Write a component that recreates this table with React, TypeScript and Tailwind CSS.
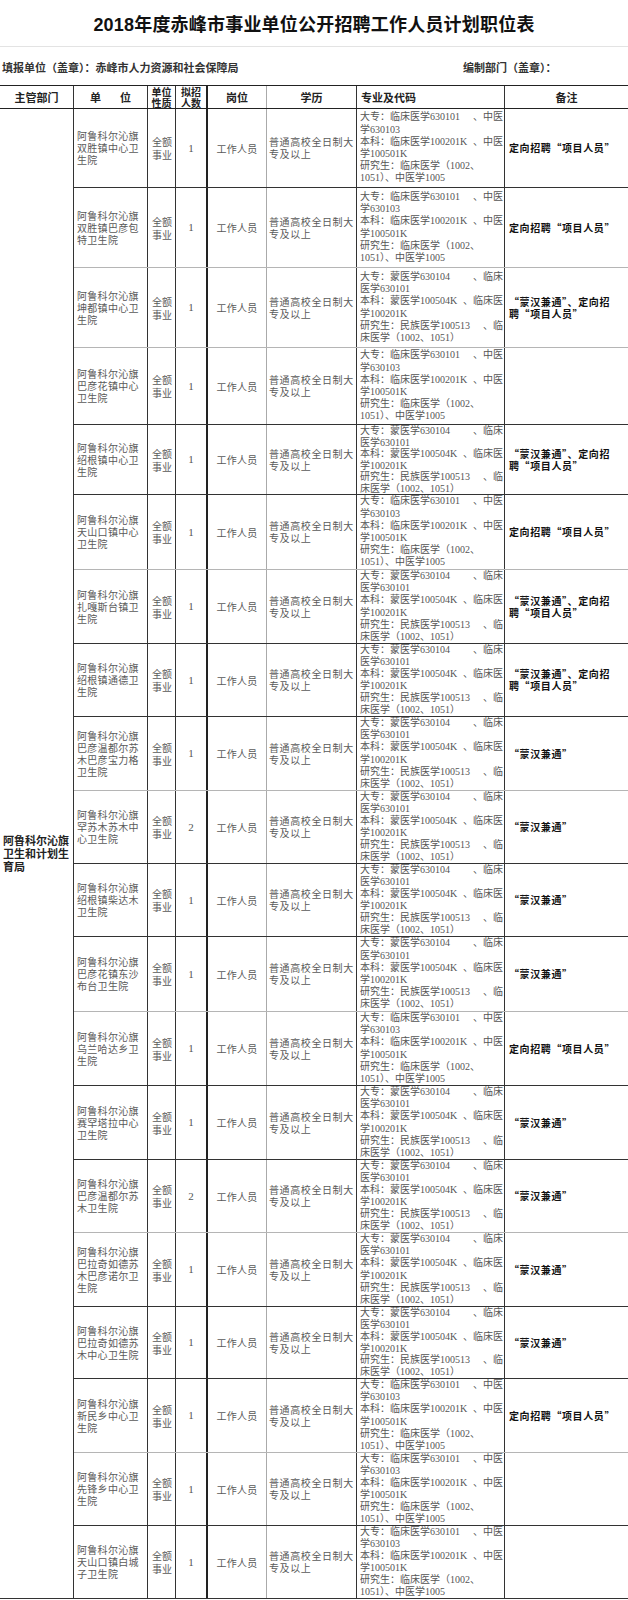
import React from 'react';

type Spec = 'A' | 'B';
type Note = 0 | 1 | 2 | 3;

interface Row {
  name: string[];
  count: number;
  spec: Spec;
  note: Note;
  h: number;
  grey?: boolean;
}

// each line: [left, right] — right part is pushed to the cell edge like the wrapped excel text
const specLines: Record<Spec, [string, string?][]> = {
  A: [
    ['大专：临床医学630101', '、中医'],
    ['学630103'],
    ['本科：临床医学100201K', '、中医'],
    ['学100501K'],
    ['研究生：临床医学（1002、'],
    ['1051）、中医学1005'],
  ],
  B: [
    ['大专：蒙医学630104', '、临床'],
    ['医学630101'],
    ['本科：蒙医学100504K', '、临床医'],
    ['学100201K'],
    ['研究生：民族医学100513', '、临'],
    ['床医学（1002、1051）'],
  ],
};

const notes: Record<Note, string[]> = {
  0: [],
  1: ['定向招聘“项目人员”'],
  2: ['“蒙汉兼通”、定向招', '聘“项目人员”'],
  3: ['“蒙汉兼通”'],
};

const P = '阿鲁科尔沁旗';

const rows: Row[] = [
  { name: [P, '双胜镇中心卫', '生院'], count: 1, spec: 'A', note: 1, h: 79 },
  { name: [P, '双胜镇巴彦包', '特卫生院'], count: 1, spec: 'A', note: 1, h: 80, grey: true },
  { name: [P, '坤都镇中心卫', '生院'], count: 1, spec: 'B', note: 2, h: 80, grey: true },
  { name: [P, '巴彦花镇中心', '卫生院'], count: 1, spec: 'A', note: 0, h: 77 },
  { name: [P, '绍根镇中心卫', '生院'], count: 1, spec: 'B', note: 2, h: 70 },
  { name: [P, '天山口镇中心', '卫生院'], count: 1, spec: 'A', note: 1, h: 75, grey: true },
  { name: [P, '扎嘎斯台镇卫', '生院'], count: 1, spec: 'B', note: 2, h: 74 },
  { name: [P, '绍根镇通德卫', '生院'], count: 1, spec: 'B', note: 2, h: 73 },
  { name: [P, '巴彦温都尔苏', '木巴彦宝力格', '卫生院'], count: 1, spec: 'B', note: 3, h: 74, grey: true },
  { name: [P, '罕苏木苏木中', '心卫生院'], count: 2, spec: 'B', note: 3, h: 73 },
  { name: [P, '绍根镇柴达木', '卫生院'], count: 1, spec: 'B', note: 3, h: 73 },
  { name: [P, '巴彦花镇东沙', '布台卫生院'], count: 1, spec: 'B', note: 3, h: 75, grey: true },
  { name: [P, '乌兰哈达乡卫', '生院'], count: 1, spec: 'A', note: 1, h: 74 },
  { name: [P, '赛罕塔拉中心', '卫生院'], count: 1, spec: 'B', note: 3, h: 74 },
  { name: [P, '巴彦温都尔苏', '木卫生院'], count: 2, spec: 'B', note: 3, h: 73, grey: true },
  { name: [P, '巴拉奇如德苏', '木巴彦诺尔卫', '生院'], count: 1, spec: 'B', note: 3, h: 74 },
  { name: [P, '巴拉奇如德苏', '木中心卫生院'], count: 1, spec: 'B', note: 3, h: 72 },
  { name: [P, '新民乡中心卫', '生院'], count: 1, spec: 'A', note: 1, h: 74, grey: true },
  { name: [P, '先锋乡中心卫', '生院'], count: 1, spec: 'A', note: 0, h: 73 },
  { name: [P, '天山口镇白城', '子卫生院'], count: 1, spec: 'A', note: 0, h: 73 },
];

const body = { fontFamily: '"Liberation Serif", "Noto Sans CJK SC", serif' };
const cjk = { fontFamily: '"Noto Sans CJK SC", "Liberation Sans", sans-serif' };

const DataRow: React.FC<{ row: Row }> = ({ row }) => (
  <div
    className={`flex border-b ${row.grey ? 'border-[#b5b5b5]' : 'border-[#333]'}`}
    style={{ height: row.h }}
  >
    <div className="w-[74px] flex items-center px-[3px] border-r border-[#333] text-[10px] leading-[12px] tracking-[0.3px] text-[#5a5a5a]">
      <div>
        {row.name.map((l, i) => (
          <div key={i} className="whitespace-nowrap">{l}</div>
        ))}
      </div>
    </div>
    <div className="w-[28px] flex items-center pl-[4px] border-r border-[#333] text-[10px] leading-[13px] text-[#5a5a5a]">
      <div>
        <div>全额</div>
        <div>事业</div>
      </div>
    </div>
    <div className="w-[32px] flex items-center justify-center border-r-2 border-[#222] text-[11px] text-[#555]" style={body}>
      {row.count}
    </div>
    <div className="w-[59px] flex items-center justify-center border-r border-[#aaa] text-[10px] tracking-[0.3px] text-[#5a5a5a]">
      工作人员
    </div>
    <div className="w-[90px] flex items-center pl-[2px] border-r border-[#333] text-[10px] leading-[12px] tracking-[0.6px] text-[#5a5a5a]">
      <div>
        <div className="whitespace-nowrap">普通高校全日制大</div>
        <div>专及以上</div>
      </div>
    </div>
    <div
      className="w-[148px] flex items-center pl-[3px] pr-[1px] border-r border-[#333] text-[10px] text-[#555] overflow-hidden"
      style={{ ...body, lineHeight: `${Math.min(12.2, (row.h - 1) / 6)}px` }}
    >
      <div className="w-full">
        {specLines[row.spec].map(([l, r], i) => (
          <div key={i} className="flex justify-between whitespace-nowrap">
            <span>{l}</span>
            {r && <span>{r}</span>}
          </div>
        ))}
      </div>
    </div>
    <div className="w-[123px] flex items-center pl-[4px] text-[10px] leading-[12px] tracking-[0.6px] font-bold text-[#111]" style={cjk}>
      <div>
        {notes[row.note].map((l, i) => (
          <div key={i} className="whitespace-nowrap">{l}</div>
        ))}
      </div>
    </div>
  </div>
);

const App: React.FC = () => (
  <div className="w-[628px] h-[1600px] overflow-hidden bg-white text-[#222]" style={cjk}>
    {/* Title */}
    <div className="h-[47px] flex items-center justify-center pt-[5px] border-b border-[#e3e3e3]">
      <h1 className="text-[18px] font-bold text-[#111] tracking-[0.2px]" style={{ fontFamily: '"Liberation Sans", "Noto Sans CJK SC", sans-serif' }}>
        2018年度赤峰市事业单位公开招聘工作人员计划职位表
      </h1>
    </div>

    {/* 填报单位 */}
    <div className="h-[38px] flex items-center text-[11px] font-bold text-[#333] pl-[2px] pt-[2px]">
      <span className="w-[461px]">填报单位（盖章）：赤峰市人力资源和社会保障局</span>
      <span>编制部门（盖章）：</span>
    </div>

    {/* Header */}
    <div className="h-[24px] flex border-t border-b border-[#222] text-[11px] font-bold text-[#222]">
      <div className="w-[74px] flex items-center justify-center border-r border-[#333]">主管部门</div>
      <div className="w-[74px] flex items-center justify-between px-[16px] border-r border-[#333]">
        <span>单</span>
        <span>位</span>
      </div>
      <div className="w-[28px] flex items-center justify-center border-r border-[#333] text-[10px] leading-[11px]">
        <p>单位<br />性质</p>
      </div>
      <div className="w-[32px] flex items-center justify-center border-r-2 border-[#222] text-[10px] leading-[11px]">
        <p>拟招<br />人数</p>
      </div>
      <div className="w-[59px] flex items-center justify-center border-r border-[#aaa]">岗位</div>
      <div className="w-[90px] flex items-center justify-center border-r border-[#333]">学历</div>
      <div className="w-[148px] flex items-center pl-[4px] border-r border-[#333]">专业及代码</div>
      <div className="w-[123px] flex items-center justify-center">备注</div>
    </div>

    {/* Body */}
    <div className="flex">
      <div className="w-[74px] flex items-center px-[3px] border-r border-[#333] border-b text-[11px] leading-[13px] font-bold text-[#222]">
        <div className="whitespace-nowrap">
          <div>阿鲁科尔沁旗</div>
          <div>卫生和计划生</div>
          <div>育局</div>
        </div>
      </div>
      <div className="flex-1">
        {rows.map((r, i) => (
          <DataRow key={i} row={r} />
        ))}
      </div>
    </div>
  </div>
);

export default App;
